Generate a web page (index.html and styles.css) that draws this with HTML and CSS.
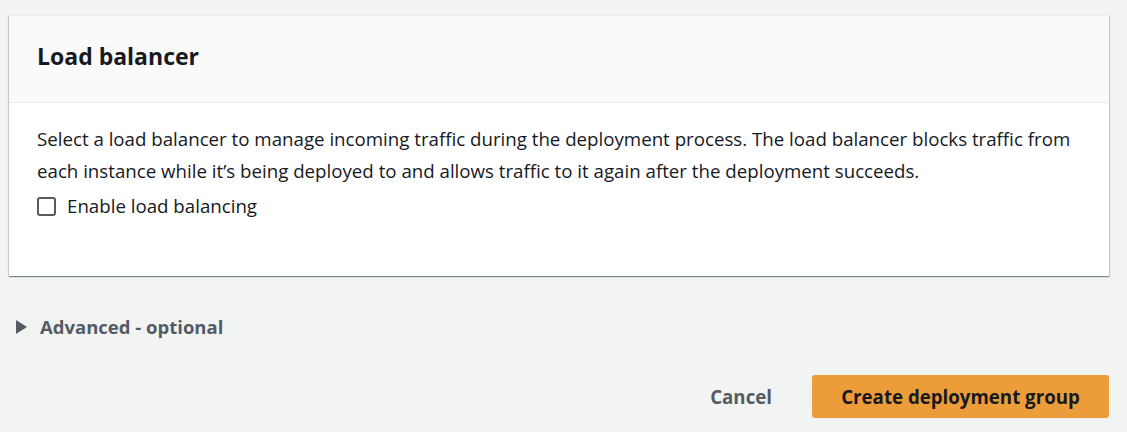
FILE: index.html
```html
<!DOCTYPE html>
<html>
<head>
<meta charset="utf-8">
<link rel="stylesheet" href="styles.css">
</head>
<body>
<div class="page">
  <section class="card">
    <header class="card-header"><h2>Load balancer</h2></header>
    <div class="card-body">
      <p class="desc">Select a load balancer to manage incoming traffic during the deployment process. The load balancer blocks traffic from each instance while it’s being deployed to and allows traffic to it again after the deployment succeeds.</p>
      <label class="check"><span class="box"></span><span>Enable load balancing</span></label>
    </div>
  </section>
  <div class="expander">
    <svg class="caret" width="11" height="14" viewBox="0 0 11 14"><path d="M0 0 L11 7 L0 14 Z" fill="#545b64"/></svg>
    <span>Advanced - optional</span>
  </div>
  <div class="actions">
    <button class="btn-link">Cancel</button>
    <button class="btn-primary">Create deployment group</button>
  </div>
</div>
</body>
</html>
```
FILE: styles.css
```css
html, body { margin: 0; padding: 0; }
body {
  background: #f2f3f3;
  font-family: "Open Sans", "Noto Sans", sans-serif;
  color: #16191f;
  width: 1127px;
  height: 432px;
  overflow: hidden;
}
.page { padding: 15px 18px 0 9px; }
.card {
  background: #fff;
  box-shadow: 0 1px 1px 0 rgba(0,28,36,0.3), 1px 1px 1px 0 rgba(0,28,36,0.15), -1px 1px 1px 0 rgba(0,28,36,0.15);
  border-top: 1px solid #eaeded;
}
.card-header {
  background: #fafafa;
  border-bottom: 1px solid #eaeded;
  display: flex;
  align-items: center;
  padding: 0 28px 6px;
  box-sizing: border-box;
  height: 87px;
}
.card-header h2 { margin: 0; font-size: 23px; font-weight: 700; }
.card-body { padding: 20px 28px 54px; }
.desc { margin: 0; font-size: 18.7px; line-height: 32px; }
.check { display: flex; align-items: center; gap: 11px; font-size: 18.7px; line-height: 32px; margin-top: 3px; }
.box { width: 15px; height: 15px; border: 2px solid #545b64; border-radius: 3px; box-sizing: content-box; }
.expander { display: flex; align-items: center; gap: 13px; margin: 38px 0 0 7px; font-weight: 700; font-size: 18.5px; color: #545b64; }
.actions { display: flex; justify-content: flex-end; align-items: center; gap: 40px; margin-top: 36px; }
button { font-family: inherit; font-weight: 700; font-size: 18.7px; border: none; cursor: pointer; }
.btn-link { background: none; color: #545b64; padding: 0; }
.btn-primary { background: #ec9d3a; color: #16191f; border-radius: 3px; height: 43px; width: 297px; }
```
